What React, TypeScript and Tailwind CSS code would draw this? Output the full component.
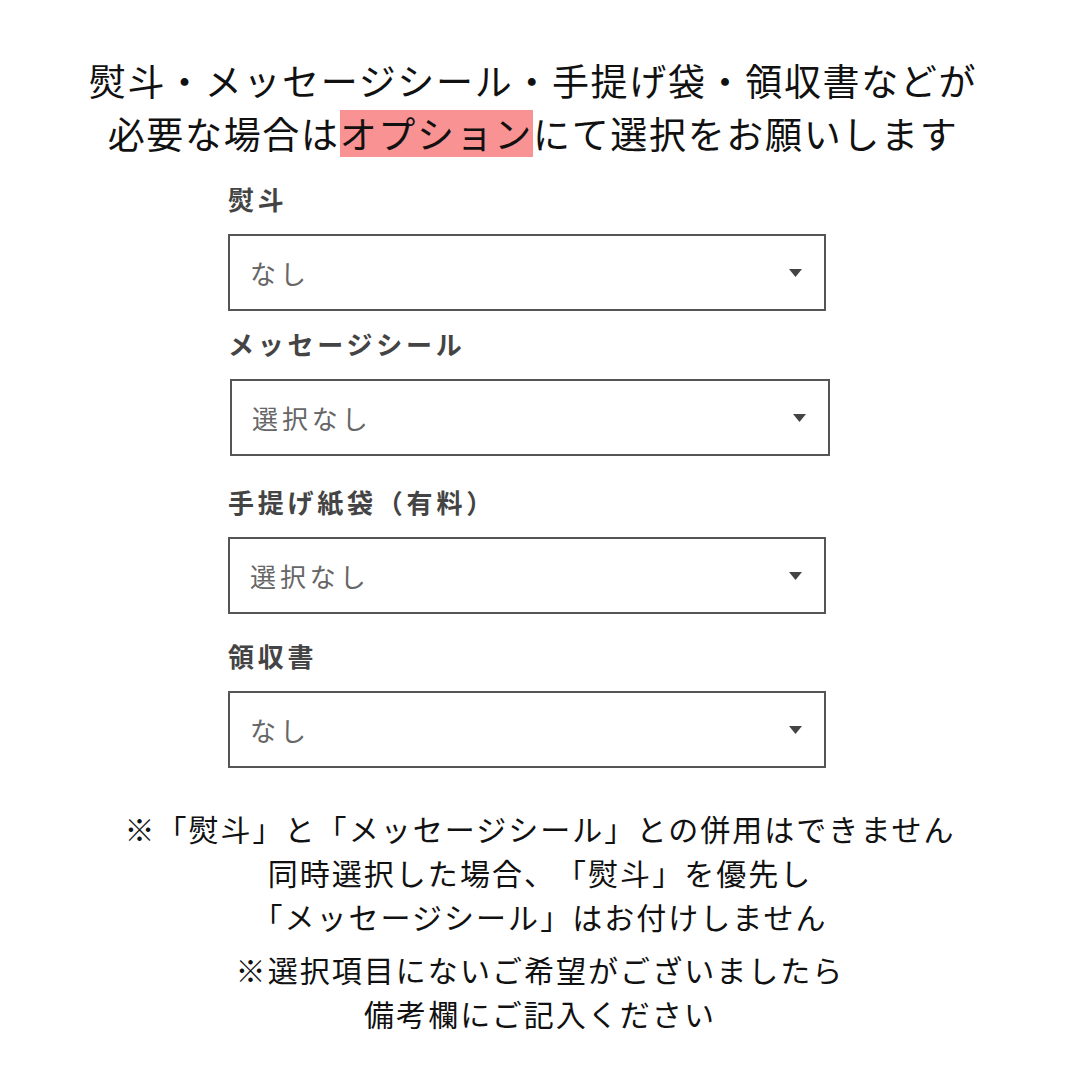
const jp = "font-['Noto_Sans_CJK_JP','Noto_Sans_CJK_SC',sans-serif] [text-spacing-trim:space-all]"

const fields = [
  { label: '熨斗', value: 'なし', labelTop: 'mt-[19px]', shift: '' },
  { label: 'メッセージシール', value: '選択なし', labelTop: 'mt-[13px]', shift: 'ml-[2px] w-[600px]' },
  { label: '手提げ紙袋（有料）', value: '選択なし', labelTop: 'mt-[26px]', shift: '' },
  { label: '領収書', value: 'なし', labelTop: 'mt-[22px]', shift: '' },
]

function SelectBox({ value, shift }: { value: string; shift: string }) {
  return (
    <div className={`mt-[16px] h-[77px] border-2 border-[#555] bg-white flex items-center justify-between pl-[20px] pr-[20px] ${shift || 'w-[598px]'}`}>
      <span className="text-[26px] tracking-[0.15em] text-[#666]">{value}</span>
      <svg width="13" height="8" viewBox="0 0 13 8" className="mr-[2px]">
        <path d="M0 0 H13 L6.5 8 Z" fill="#444" />
      </svg>
    </div>
  )
}

export default function App() {
  return (
    <div className={`w-[1080px] h-[1080px] bg-white text-[#111] overflow-hidden ${jp}`}>
      {/* heading */}
      <div className="pt-[54px] pr-[14px] text-center text-[37px] leading-[53px] tracking-[0.045em]">
        <p>熨斗・メッセージシール・手提げ袋・領収書などが</p>
        <p>
          必要な場合は<span className="inline-block bg-[#f99292] leading-[47px]">オプション</span>にて選択をお願いします
        </p>
      </div>

      {/* options */}
      <div className="ml-[228px] w-[602px]">
        {fields.map((f) => (
          <div key={f.label}>
            <div className={`${f.labelTop} text-[26px] leading-[39px] font-bold tracking-[0.145em] text-[#444]`}>
              {f.label}
            </div>
            <SelectBox value={f.value} shift={f.shift} />
          </div>
        ))}
      </div>

      {/* notes */}
      <div className="mt-[38px] text-center text-[30px] leading-[44px] tracking-[0.068em]">
        <p>※「熨斗」と「メッセージシール」との併用はできません</p>
        <p>同時選択した場合、「熨斗」を優先し</p>
        <p>「メッセージシール」はお付けしません</p>
        <p className="mt-[9px]">※選択項目にないご希望がございましたら</p>
        <p>備考欄にご記入ください</p>
      </div>
    </div>
  )
}
